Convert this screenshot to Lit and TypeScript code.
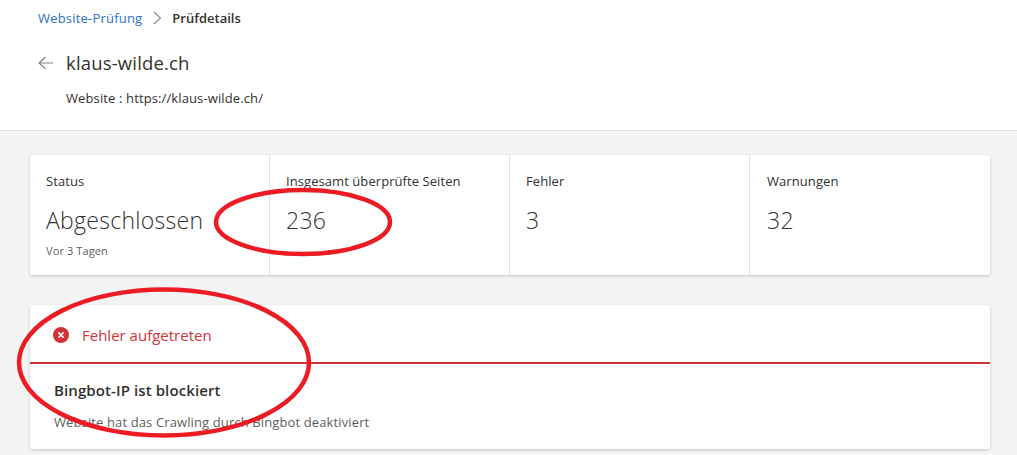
import { LitElement, html, css } from "lit";
import { customElement } from "lit/decorators.js";

const stats = [
  { label: "Status", value: "Abgeschlossen", sub: "Vor 3 Tagen" },
  { label: "Insgesamt überprüfte Seiten", value: "236", sub: "" },
  { label: "Fehler", value: "3", sub: "" },
  { label: "Warnungen", value: "32", sub: "" },
];

@customElement("app-root")
export class AppRoot extends LitElement {
  static styles = css`
    :host {
      display: block;
      position: relative;
      width: 1017px;
      height: 455px;
      overflow: hidden;
      background: #f4f4f4;
      font-family: "Open Sans", "Noto Sans", sans-serif;
      color: #323130;
    }
    header {
      height: 131px;
      box-sizing: border-box;
      background: #fff;
      border-bottom: 1px solid #e1e1e1;
      padding: 9px 0 0 38px;
    }
    .crumbs {
      display: flex;
      align-items: center;
      height: 18px;
      font-size: 13px;
      letter-spacing: 0.2px;
    }
    .crumbs a { color: #2b74c4; }
    .crumbs svg { margin: 0 10px 0 11px; }
    .crumbs b { font-weight: 600; letter-spacing: 0; }
    .title {
      display: flex;
      align-items: center;
      margin-top: 18px;
      height: 36px;
    }
    .title svg { margin-right: 13px; }
    h1 {
      margin: -2px 0 0;
      font-size: 18.5px;
      font-weight: 400;
      letter-spacing: 0.17px;
    }
    .site {
      margin: 8px 0 0 28px;
      font-size: 13px;
      line-height: 18px;
      letter-spacing: 0.12px;
    }
    .card {
      margin: 0 27px 0 30px;
      background: #fff;
      border-radius: 2px;
      box-shadow: 0 1px 3px rgba(0, 0, 0, 0.2);
    }
    .stats {
      display: grid;
      grid-template-columns: repeat(4, 240px);
      height: 120px;
      margin-top: 24px;
    }
    .stat {
      box-sizing: border-box;
      padding: 17px 16px 0 16px;
      border-right: 1px solid #e1e1e1;
    }
    .stat:last-child { border-right: 0; padding-left: 17px; }
    .label {
      font-size: 13px;
      line-height: 18px;
      letter-spacing: 0.07px;
    }
    .value {
      margin-top: 15px;
      font-size: 23px;
      line-height: 30px;
      letter-spacing: 0.28px;
      font-weight: 300;
    }
    .sub {
      margin-top: 9px;
      font-size: 11px;
      line-height: 14px;
      color: #605e5c;
      letter-spacing: 0.1px;
    }
    .error { margin-top: 30px; height: 144px; }
    .error-head {
      display: flex;
      align-items: center;
      gap: 13px;
      height: 59px;
      box-sizing: border-box;
      padding: 2px 0 0 23px;
      border-bottom: 2px solid #d13438;
      color: #d13438;
      font-size: 15px;
    }
    .error-body { padding: 16px 24px 0; }
    h2 {
      margin: 0;
      font-size: 15px;
      line-height: 20px;
      font-weight: 600;
      letter-spacing: 0.1px;
    }
    .error-body p {
      margin: 13px 0 0;
      font-size: 13px;
      line-height: 18px;
      color: #605e5c;
      letter-spacing: 0.12px;
    }
    .marks {
      position: absolute;
      inset: 0;
      pointer-events: none;
    }
  `;

  render() {
    return html`
      <header>
        <nav class="crumbs">
          <a>Website-Prüfung</a>
          <svg width="9" height="14" viewBox="0 0 9 14" fill="none" stroke="#8a8886" stroke-width="1.1">
            <path d="M1 1l6.5 6L1 13" />
          </svg>
          <b>Prüfdetails</b>
        </nav>
        <div class="title">
          <svg width="15" height="14" viewBox="0 0 15 14" fill="none" stroke="#7d8a8a" stroke-width="1.2">
            <path d="M15 7H1M7.5 1L1 7l6.5 6" />
          </svg>
          <h1>klaus-wilde.ch</h1>
        </div>
        <div class="site">Website : https://klaus-wilde.ch/</div>
      </header>
      <section class="card stats">
        ${stats.map(
          (s) => html`<div class="stat">
            <div class="label">${s.label}</div>
            <div class="value">${s.value}</div>
            ${s.sub ? html`<div class="sub">${s.sub}</div>` : ""}
          </div>`
        )}
      </section>
      <section class="card error">
        <div class="error-head">
          <svg width="16" height="16" viewBox="0 0 16 16">
            <circle cx="8" cy="8" r="8" fill="#d13438" />
            <path d="M5.4 5.4l5.2 5.2M10.6 5.4l-5.2 5.2" stroke="#fff" stroke-width="1.5" />
          </svg>
          <span>Fehler aufgetreten</span>
        </div>
        <div class="error-body">
          <h2>Bingbot-IP ist blockiert</h2>
          <p>Website hat das Crawling durch Bingbot deaktiviert</p>
        </div>
      </section>
      <svg class="marks" width="1017" height="455" viewBox="0 0 1017 455" fill="none" stroke="#ed1c24" stroke-width="4.5">
        <ellipse cx="303" cy="222" rx="87" ry="32" />
        <ellipse cx="164" cy="362.5" rx="145" ry="73" />
      </svg>
    `;
  }
}
